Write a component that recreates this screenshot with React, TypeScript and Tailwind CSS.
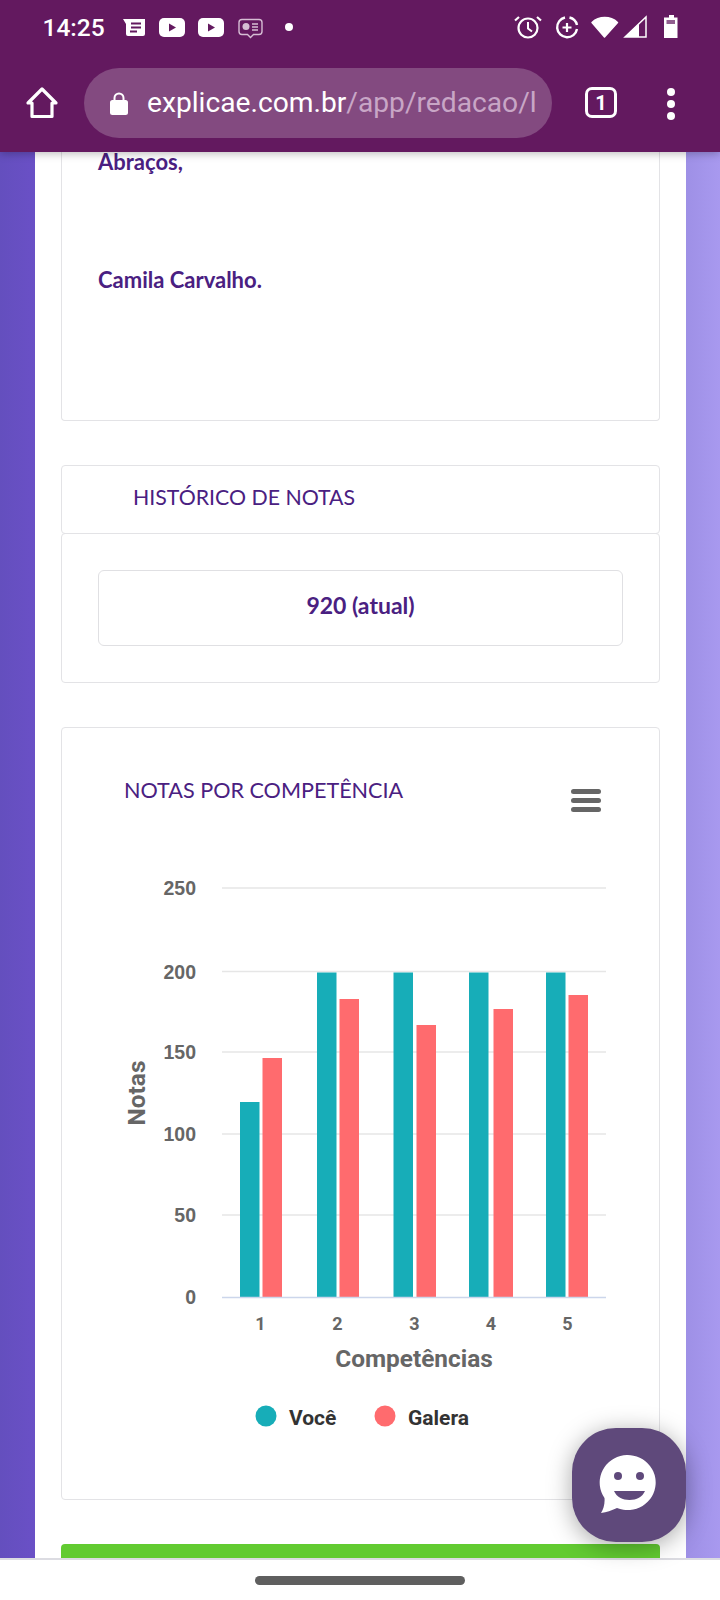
const bars = [
  { label: "1", x: 240, red: 262.5, tealTop: 1102, redTop: 1058, labelX: 260.5 },
  { label: "2", x: 317, red: 339.5, tealTop: 972.5, redTop: 999, labelX: 337.5 },
  { label: "3", x: 393.5, red: 416.5, tealTop: 972.5, redTop: 1025, labelX: 414.5 },
  { label: "4", x: 469, red: 493.5, tealTop: 972.5, redTop: 1009, labelX: 491 },
  { label: "5", x: 546, red: 568.5, tealTop: 972.5, redTop: 995, labelX: 567.5 },
];

const ticks = [
  { label: "250", y: 888 },
  { label: "200", y: 971.5 },
  { label: "150", y: 1052 },
  { label: "100", y: 1134 },
  { label: "50", y: 1215 },
];

function StatusIcons() {
  return (
    <svg width="720" height="56" viewBox="0 0 720 56" className="absolute left-0 top-0" fill="none">
      {/* notification: news */}
      <path d="M123 19h22v15a2 2 0 0 1-2 2h-15a2 2 0 0 1-2-2v-10z" fill="#fff" />
      <path d="M131 23.5h10M131 27.5h10M130 31.5h7" stroke="#63195f" strokeWidth="2" />
      {/* youtube x2 */}
      <rect x="159" y="18" width="26" height="19" rx="5" fill="#fff" />
      <path d="M169 23.5l7 4-7 4z" fill="#63195f" />
      <rect x="198" y="18" width="26" height="19" rx="5" fill="#fff" />
      <path d="M208 23.5l7 4-7 4z" fill="#63195f" />
      {/* message */}
      <path d="M242 19.500h17a3 3 0 0 1 3 3v9a3 3 0 0 1-3 3h-5.500l-3 3-3-3H242a3 3 0 0 1-3-3v-9a3 3 0 0 1 3-3z" stroke="#d6bdd4" strokeWidth="1.400" />
      <circle cx="246" cy="26.500" r="3.500" fill="#d6bdd4" />
      <path d="M252 24h6M252 27h6M252 30h6" stroke="#d6bdd4" strokeWidth="1.300" />
      <circle cx="289" cy="27" r="4" fill="#fff" />
      {/* alarm */}
      <circle cx="528" cy="28" r="9.500" stroke="#fff" strokeWidth="2.200" />
      <path d="M528 22v6.500l4 3" stroke="#fff" strokeWidth="2" />
      <path d="M519 17l-4 3.500M537 17l4 3.500" stroke="#fff" strokeWidth="2.200" />
      {/* data saver */}
      <path d="M565 17.500a10 10 0 1 0 12 11.500" stroke="#fff" strokeWidth="2.400" />
      <path d="M569.500 17.500a10 10 0 0 1 7.500 7.500" stroke="#fff" strokeWidth="2.400" />
      <path d="M567 23v9M562.500 27.500h9" stroke="#fff" strokeWidth="2.200" />
      {/* wifi */}
      <path d="M592 22.500a19 19 0 0 1 25.500 0L604.500 37z" fill="#fff" stroke="#fff" strokeWidth="1.500" strokeLinejoin="round" />
      {/* signal */}
      <path d="M625 37l21-20v20z" stroke="#fff" strokeWidth="1.500" />
      <path d="M625 37l14-13.500V37z" fill="#fff" />
      {/* battery */}
      <path d="M669 15h5v2.500h3.500V38h-13.500V17.500h5z" fill="#fff" />
      <rect x="666.500" y="20" width="8.500" height="4" fill="#63195f" opacity="0.700" />
    </svg>
  );
}

function Chart() {
  return (
    <svg width="597" height="580" viewBox="62 860 597 580" className="block" fill="none">
      {ticks.map((t) => (
        <g key={t.label}>
          <line x1="222" x2="606" y1={t.y} y2={t.y} stroke="#e6e6e6" strokeWidth="1.500" />
          <text x="196" y={t.y + 7} textAnchor="end" fontFamily="Liberation Sans" fontWeight="700" fontSize="19.500" fill="#666666">{t.label}</text>
        </g>
      ))}
      <text x="196" y="1304" textAnchor="end" fontFamily="Liberation Sans" fontWeight="700" fontSize="19.500" fill="#666666">0</text>
      {bars.map((b) => (
        <g key={b.label}>
          <rect x={b.x} y={b.tealTop} width="19.500" height={1297 - b.tealTop} fill="#17adb8" />
          <rect x={b.red} y={b.redTop} width="19.500" height={1297 - b.redTop} fill="#ff6b6e" />
          <text x={b.labelX} y="1330" textAnchor="middle" fontFamily="Roboto" fontWeight="700" fontSize="18" fill="#666666">{b.label}</text>
        </g>
      ))}
      <line x1="222" x2="606" y1="1297.500" y2="1297.500" stroke="#ccd6eb" strokeWidth="1.500" />
      <text x="414" y="1367" textAnchor="middle" fontFamily="Roboto" fontWeight="700" fontSize="24.400" fill="#666666">Competências</text>
      <text transform="translate(145 1093) rotate(-90)" textAnchor="middle" fontFamily="Roboto" fontWeight="700" fontSize="24.400" fill="#666666">Notas</text>
      <circle cx="266" cy="1416" r="10.500" fill="#17adb8" />
      <text x="289" y="1425" fontFamily="Roboto" fontWeight="700" fontSize="21" fill="#333333">Você</text>
      <circle cx="385" cy="1416" r="10.500" fill="#ff6b6e" />
      <text x="408" y="1425" fontFamily="Roboto" fontWeight="700" fontSize="21" fill="#333333">Galera</text>
    </svg>
  );
}

export default function App() {
  return (
    <div className="relative flex h-[1600px] w-[720px] flex-col overflow-hidden bg-white font-['Lato',sans-serif]">
      <header className="relative z-10 h-[152px] shrink-0 bg-[#63195f] shadow-[0_2px_8px_rgba(0,0,0,0.25)]">
        <div className="flex h-[56px] items-center pl-[42.500px] font-['Roboto',sans-serif] text-[24.500px] font-medium text-white">14:25</div>
        <StatusIcons />
        <div className="flex h-[96px] items-start">
          <svg width="34" height="34" viewBox="0 0 34 34" fill="none" className="ml-[25px] mt-[30px] shrink-0">
            <path d="M17 3L3 17h4v13.500h20V17h4z" stroke="#fff" strokeWidth="3.200" strokeLinejoin="round" />
          </svg>
          <div className="ml-[25px] mt-[12px] flex h-[70px] w-[468px] items-center overflow-hidden rounded-[35px] bg-[#834a80] pl-[26px]">
            <svg width="18" height="23" viewBox="0 0 18 23" className="shrink-0">
              <path d="M4.500 9V6a4.500 4.500 0 0 1 9 0v3" fill="none" stroke="#fff" strokeWidth="2" />
              <rect x="0" y="8" width="18" height="15" rx="2.500" fill="#fff" />
            </svg>
            <span className="ml-[19px] whitespace-nowrap font-['Roboto',sans-serif] text-[28.200px] text-white">
              explicae.com.br<span className="text-[#c8a6c6]">/app/redacao/l</span>
            </span>
          </div>
          <div className="ml-[33px] mt-[31px] flex h-[31px] w-[32px] shrink-0 items-center justify-center rounded-[7px] border-[3px] border-white font-['Roboto',sans-serif] text-[20px] font-bold text-white">1</div>
          <div className="ml-[50px] mt-[32px] flex shrink-0 flex-col gap-[4px]">
            <span className="h-[8px] w-[8px] rounded-full bg-white" />
            <span className="h-[8px] w-[8px] rounded-full bg-white" />
            <span className="h-[8px] w-[8px] rounded-full bg-white" />
          </div>
        </div>
      </header>

      <main className="flex min-h-0 flex-1">
        <div className="w-[35px] shrink-0 bg-gradient-to-r from-[#644fbe] to-[#6a50c6]" />
        <div className="min-w-0 flex-1 overflow-hidden bg-white px-[26px] text-[#4a2081]">
          <section className="flex h-[269px] flex-col rounded-b-[4px] border border-t-0 border-[#e3e3e6] pl-[36px] text-[22px] font-bold leading-[24px]">
            <p className="-mt-[2px]">Abraços,</p>
            <p className="mt-[94px]">Camila Carvalho.</p>
          </section>

          <section className="mt-[44px] flex h-[69px] items-center rounded-[4px] border border-[#e3e3e6] pb-[5px] pl-[71px] text-[21.300px] leading-[28px]">
            HISTÓRICO DE NOTAS
          </section>
          <section className="-mt-px h-[150px] rounded-[4px] border border-[#e3e3e6] p-[36px]">
            <div className="flex h-[76px] items-center justify-center rounded-[6px] border border-[#e0e0e3] pb-[5px] text-[23px] font-bold">920 (atual)</div>
          </section>

          <section className="mt-[44px] h-[773px] rounded-[4px] border border-[#e3e3e6]">
            <div className="flex h-[132px] items-start justify-between pl-[62px] pr-[58px]">
              <h2 className="pt-[50px] text-[21.600px] leading-[24px]">NOTAS POR COMPETÊNCIA</h2>
              <div className="mt-[61px] flex w-[30px] flex-col gap-[4px]">
                <span className="h-[5px] rounded-full bg-[#666666]" />
                <span className="h-[5px] rounded-full bg-[#666666]" />
                <span className="h-[5px] rounded-full bg-[#666666]" />
              </div>
            </div>
            <Chart />
          </section>

          <div className="mt-[44px] h-[40px] rounded-t-[4px] bg-[#62cb31]" />
        </div>
        <div className="w-[34px] shrink-0 bg-gradient-to-r from-[#9e90e6] to-[#a899ef]" />
      </main>

      <nav className="flex h-[42px] shrink-0 items-center justify-center border-t-2 border-[#dcdce2] bg-white">
        <span className="mt-[1px] h-[9px] w-[210px] rounded-full bg-[#5f5f5f]" />
      </nav>

      <button className="absolute bottom-[58px] right-[34px] z-20 flex h-[114px] w-[114px] items-center justify-center rounded-[44px] bg-[#5f497b] shadow-[0_4px_24px_rgba(0,0,0,0.35)]">
        <svg width="60" height="60" viewBox="0 0 60 60">
          <path d="M5.500 43A28 27.500 0 1 1 18 53C12 55.500 8 57.500 2 58C4.500 54 6 49 5.500 43z" fill="#fff" />
          <circle cx="19" cy="21" r="4" fill="#5f497b" />
          <circle cx="41" cy="21" r="4" fill="#5f497b" />
          <path d="M15 36h31c-2.500 6-8.500 9-15.500 9S17.500 42 15 36z" fill="#5f497b" />
        </svg>
      </button>
    </div>
  );
}
